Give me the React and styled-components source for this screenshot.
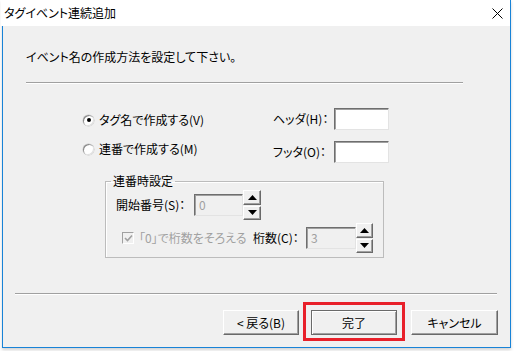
import React from 'react';
import styled, {createGlobalStyle} from 'styled-components';

const GlobalStyle = createGlobalStyle`
    html, body {
        margin: 0;
        background: #ffffff;
    }
    body {
        font-family: "Noto Sans CJK JP", "Noto Sans", sans-serif;
        font-size: 12px;
        font-feature-settings: "palt";
        color: #000;
    }
`;

const Screen = styled.div`
    width: 514px;
    height: 351px;
    padding-left: 2px;
    box-sizing: border-box;
    overflow: hidden;
`;

const Frame = styled.div`
    width: 509px;
    height: 348px;
    box-sizing: border-box;
    display: flex;
    flex-direction: column;
    border: 1px solid #1883d7;
    border-top: none;
    box-shadow: 0 2px 3px rgba(0, 0, 0, 0.18);
`;

const TitleBar = styled.div`
    height: 26px;
    flex: none;
    display: flex;
    align-items: center;
    justify-content: space-between;
    background: #fff;
    padding: 0 7px 0 3px;
    margin-left: -2px;
`;

const Title = styled.span`
    line-height: 16px;
`;

const Body = styled.div`
    flex: 1;
    display: flex;
    flex-direction: column;
    background: #f0f0f0;
`;

const Instruction = styled.div`
    margin: 23px 0 0 23px;
    line-height: 16px;
`;

const Separator = styled.div`
    height: 1px;
    background: #a0a0a0;
    border-bottom: 1px solid #fff;
    margin: ${p => p.$margin};
    width: ${p => p.$width}px;
`;

const Options = styled.div`
    display: flex;
    margin: 24px 0 0 80px;
`;

const RadioColumn = styled.div`
    width: 190px;
    display: flex;
    flex-direction: column;
    gap: 13px;
    padding-top: 4px;
`;

const RadioRow = styled.label`
    display: flex;
    align-items: center;
    gap: 5px;
    height: 16px;
    line-height: 16px;
`;

const RadioCircle = styled.span`
    width: 11px;
    height: 11px;
    border-radius: 50%;
    background: #fff;
    box-shadow: inset 1px 1px 0 #8a8a8a, inset -1px -1px 0 #e0e0e0, 0 0 0 0.5px #c8c8c8;
    display: flex;
    align-items: center;
    justify-content: center;
    &::after {
        content: "";
        width: 4px;
        height: 4px;
        border-radius: 50%;
        background: ${p => p.$checked ? '#000' : 'transparent'};
    }
`;

const FieldColumn = styled.div`
    display: flex;
    flex-direction: column;
    gap: 11px;
`;

const FieldRow = styled.div`
    display: flex;
    align-items: center;
    height: 22px;
`;

const FieldLabel = styled.span`
    width: ${p => p.$width}px;
    line-height: 16px;
    color: ${p => p.$disabled ? '#a0a0a0' : '#000'};
`;

const TextBox = styled.div`
    width: ${p => p.$width}px;
    height: ${p => p.$height || 22}px;
    box-sizing: border-box;
    border: 1px solid;
    border-color: #6e6e6e #e3e3e3 #e3e3e3 #6e6e6e;
    box-shadow: inset 1px 1px 0 #a0a0a0;
    background: ${p => p.$disabled ? '#f0f0f0' : '#fff'};
    color: #a0a0a0;
    padding: 2px 0 0 4px;
    line-height: 16px;
`;

const Group = styled.fieldset`
    margin: 10px 0 0 102px;
    width: 279px;
    box-sizing: border-box;
    min-width: 0;
    border: 1px solid #bcbcbc;
    box-shadow: inset 1px 1px 0 #fff;
    padding: 1px 10px 4px 10px;
    display: flex;
    flex-direction: column;
    gap: 3px;
`;

const Legend = styled.legend`
    padding: 0 2px;
    margin-left: -5px;
    line-height: 16px;
`;

const GroupRow = styled.div`
    display: flex;
    align-items: center;
    height: 30px;
    padding-left: ${p => p.$indent || 0}px;
`;

const Spinner = styled.div`
    display: flex;
    flex-direction: column;
    gap: 1px;
    width: ${p => p.$width}px;
    height: 30px;
`;

const SpinButton = styled.div`
    flex: 1;
    box-sizing: border-box;
    background: #f0f0f0;
    border: 1px solid;
    border-color: #fff #696969 #696969 #fff;
    box-shadow: inset -1px -1px 0 #a0a0a0;
    display: flex;
    align-items: center;
    justify-content: center;
`;

const CheckBox = styled.span`
    width: 12px;
    height: 12px;
    box-sizing: border-box;
    border: 1px solid;
    border-color: #a0a0a0 #fff #fff #a0a0a0;
    background: #f0f0f0;
    display: flex;
    align-items: center;
    justify-content: center;
    margin-right: 5px;
`;

const ButtonRow = styled.div`
    display: flex;
    justify-content: flex-end;
    align-items: center;
    gap: 12px;
    margin: 15px 12px 0 0;
`;

const Button = styled.button`
    width: ${p => p.$width}px;
    height: 25px;
    margin-left: ${p => p.$extra || 0}px;
    font: inherit;
    color: #000;
    background: #f0f0f0;
    box-sizing: border-box;
    border: 1px solid;
    border-color: ${p => p.$default ? '#6a6a6a' : '#fff #696969 #696969 #fff'};
    box-shadow: ${p => p.$default
        ? 'inset 1px 1px 0 #fff, inset -1px -1px 0 #a0a0a0'
        : 'inset -1px -1px 0 #a0a0a0'};
    padding: 0;
    line-height: 16px;
`;

const Highlight = styled.span`
    position: relative;
    display: flex;
    &::after {
        content: "";
        position: absolute;
        top: -8px;
        left: -8px;
        right: -8px;
        bottom: -6px;
        border: 3px solid #e8202a;
        pointer-events: none;
    }
`;

const Arrow = ({up}) =>
    <svg width="9" height="5" viewBox="0 0 9 5">
        <path d={up ? 'M0 5 L4.5 0 L9 5 Z' : 'M0 0 L4.5 5 L9 0 Z'} fill="#000"/>
    </svg>;

const UpDown = ({width}) =>
    <Spinner $width={width}>
        <SpinButton><Arrow up/></SpinButton>
        <SpinButton><Arrow/></SpinButton>
    </Spinner>;

const CloseIcon = () =>
    <svg width="11" height="11" viewBox="0 0 11 11">
        <path d="M0.5 0.5 L10.5 10.5 M10.5 0.5 L0.5 10.5" stroke="#000" strokeWidth="1"/>
    </svg>;

const CheckMark = () =>
    <svg width="9" height="8" viewBox="0 0 9 8">
        <path d="M1 4 L3.5 6.5 L8 1.5" stroke="#a0a0a0" strokeWidth="1.6" fill="none"/>
    </svg>;

export default function App() {
    return <>
        <GlobalStyle/>
        <Screen>
            <Frame>
                <TitleBar>
                    <Title>タグイベント連続追加</Title>
                    <CloseIcon/>
                </TitleBar>
                <Body>
                    <Instruction>イベント名の作成方法を設定して下さい。</Instruction>
                    <Separator $margin="17px 0 0 23px" $width={437}/>
                    <Options>
                        <RadioColumn>
                            <RadioRow><RadioCircle $checked/>タグ名で作成する(V)</RadioRow>
                            <RadioRow><RadioCircle/>連番で作成する(M)</RadioRow>
                        </RadioColumn>
                        <FieldColumn>
                            <FieldRow>
                                <FieldLabel $width={61}>ヘッダ(H)：</FieldLabel>
                                <TextBox $width={55}/>
                            </FieldRow>
                            <FieldRow>
                                <FieldLabel $width={61}>フッタ(O)：</FieldLabel>
                                <TextBox $width={55}/>
                            </FieldRow>
                        </FieldColumn>
                    </Options>
                    <Group>
                        <Legend>連番時設定</Legend>
                        <GroupRow>
                            <FieldLabel $width={78}>開始番号(S)：</FieldLabel>
                            <TextBox $width={49} $disabled>0</TextBox>
                            <UpDown width={18}/>
                        </GroupRow>
                        <GroupRow $indent={6}>
                            <CheckBox><CheckMark/></CheckBox>
                            <FieldLabel $width={114} $disabled>「0」で桁数をそろえる</FieldLabel>
                            <FieldLabel $width={53}>桁数(C)：</FieldLabel>
                            <TextBox $width={50} $disabled>3</TextBox>
                            <UpDown width={17}/>
                        </GroupRow>
                    </Group>
                    <Separator $margin="35px 0 0 12px" $width={482}/>
                    <ButtonRow>
                        <Button $width={76}>&lt; 戻る(B)</Button>
                        <Highlight>
                            <Button $width={86} $default>完了</Button>
                        </Highlight>
                        <Button $width={87} $extra={2}>キャンセル</Button>
                    </ButtonRow>
                </Body>
            </Frame>
        </Screen>
    </>;
}
